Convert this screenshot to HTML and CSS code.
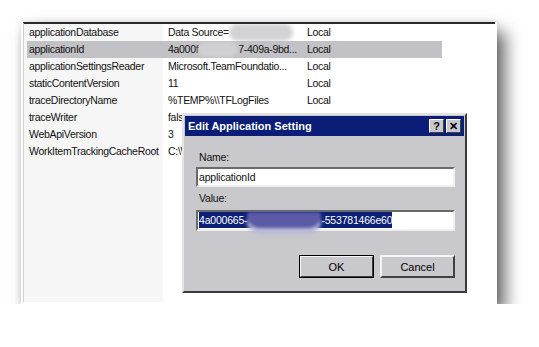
FILE: index.html
```html
<!DOCTYPE html>
<html lang="en">
<head>
  <meta charset="UTF-8" />
  <title>Application Settings</title>
  <link rel="stylesheet" href="styles.css">
</head>
<body>

  <div class="panel">
    <div class="list">
      <div class="row">
        <span class="key">applicationDatabase</span>
        <span class="val">Data Source=<i class="smudge smudge-grey"></i></span>
        <span class="scope">Local</span>
      </div>
      <div class="row selected">
        <span class="key">applicationId</span>
        <span class="val">4a000f<i class="smudge smudge-sel"></i>7-409a-9bd...</span>
        <span class="scope">Local</span>
      </div>
      <div class="row">
        <span class="key">applicationSettingsReader</span>
        <span class="val">Microsoft.TeamFoundatio...</span>
        <span class="scope">Local</span>
      </div>
      <div class="row">
        <span class="key">staticContentVersion</span>
        <span class="val">11</span>
        <span class="scope">Local</span>
      </div>
      <div class="row">
        <span class="key">traceDirectoryName</span>
        <span class="val">%TEMP%\\TFLogFiles</span>
        <span class="scope">Local</span>
      </div>
      <div class="row">
        <span class="key">traceWriter</span>
        <span class="val">false</span>
        <span class="scope">Local</span>
      </div>
      <div class="row">
        <span class="key">WebApiVersion</span>
        <span class="val">3</span>
        <span class="scope">Local</span>
      </div>
      <div class="row">
        <span class="key">WorkItemTrackingCacheRoot</span>
        <span class="val">C:\Windows</span>
        <span class="scope">Local</span>
      </div>
    </div>

    <div class="dialog">
      <div class="titlebar">
        <span class="title">Edit Application Setting</span>
        <span class="caption-btn">?</span>
        <span class="caption-btn">&#x2715;</span>
      </div>
      <div class="dialog-body">
        <label class="field-label">Name:</label>
        <div class="textbox">applicationId</div>
        <label class="field-label">Value:</label>
        <div class="textbox tall">
          <span class="selection">4a000665-<i class="smudge smudge-blue"></i>-553781466e60</span>
        </div>
        <div class="buttons">
          <button class="btn default">OK</button>
          <button class="btn">Cancel</button>
        </div>
      </div>
    </div>
  </div>

</body>
</html>
```

FILE: styles.css
```css
body {
  margin: 0;
  padding: 22px 0 0 21px;
  background: #fff;
  font-family: 'Liberation Sans', Arial, sans-serif;
  font-size: 10.5px;
  letter-spacing: -0.3px;
  color: #111;
}

.panel {
  position: relative;
  width: 472px;
  height: 280px;
  padding: 0 2px 2px 2px;
  background: #fff;
  box-shadow: 8px 10px 16px rgba(0, 0, 0, 0.6), 0 0 6px rgba(0, 0, 0, 0.12);
}

.list {
  height: 100%;
  border-top: 2px solid #2a2a2a;
  border-left: 1px solid #cfcfcf;
  background: linear-gradient(to right, #f6f6f6 139px, #fff 139px);
  padding-left: 3px;
  box-sizing: border-box;
}

.row {
  display: grid;
  grid-template-columns: 136px 139px 1fr;
  width: 415px;
  height: 17px;
  line-height: 17px;
  white-space: nowrap;
}

.row.selected {
  background: #c2c1c6;
}

.key {
  padding-left: 2px;
}

.val,
.scope {
  padding-left: 5px;
  overflow: hidden;
}

.smudge {
  display: inline-block;
  vertical-align: top;
  border-radius: 9px;
  filter: blur(2px);
}

.smudge-grey {
  width: 64px;
  height: 17px;
  background: #d2d2d4;
}

.smudge-sel {
  width: 40px;
  height: 15px;
  margin-top: 1px;
  background: #d0d0d4;
}

/* dialog floating over the list */
.dialog {
  position: absolute;
  left: 161px;
  top: 91px;
  width: 281px;
  height: 176px;
  background: #c9c8cc;
  border: 2px solid;
  border-color: #e4e4e4 #3c3c3c #3c3c3c #e4e4e4;
  letter-spacing: 0;
}

.titlebar {
  display: flex;
  align-items: center;
  gap: 2px;
  height: 20px;
  margin: 1px;
  padding: 0 3px 0 3px;
  background: #0a1e78;
  color: #fff;
}

.title {
  flex: 1;
  font-weight: bold;
  font-size: 11px;
}

.caption-btn {
  width: 13px;
  height: 12px;
  line-height: 12px;
  text-align: center;
  background: #c9c8cc;
  color: #000;
  font-weight: bold;
  font-size: 11px;
  border: 1px solid;
  border-color: #fff #404040 #404040 #fff;
}

.dialog-body {
  display: flex;
  flex-direction: column;
  padding: 13px 10px 0 12px;
  letter-spacing: -0.2px;
}

.field-label {
  margin-left: 3px;
  line-height: 14px;
  margin-bottom: 3px;
}

.textbox {
  height: 16px;
  line-height: 16px;
  padding-left: 1px;
  margin-bottom: 4px;
  background: #fff;
  border: 2px solid;
  border-color: #6a6a6a #f0f0f0 #f0f0f0 #6a6a6a;
  white-space: nowrap;
}

.textbox.tall {
  height: 17px;
  line-height: 17px;
  margin-top: 2px;
}

.selection {
  display: inline-block;
  height: 16px;
  line-height: 16px;
  background: #0c2078;
  color: #fff;
}

.smudge-blue {
  width: 74px;
  height: 16px;
  background: #5b5aa6;
  filter: blur(1.5px);
  border-radius: 4px 4px 14px 14px;
  box-shadow: 0 6px 3px #b9b8d8;
}

.buttons {
  display: flex;
  justify-content: flex-end;
  gap: 6px;
  margin-top: 20px;
}

.btn {
  width: 75px;
  height: 23px;
  font-family: inherit;
  font-size: 11px;
  background: #c9c8cc;
  color: #000;
  border: 2px solid;
  border-color: #f4f4f4 #404040 #404040 #f4f4f4;
  padding: 0;
}

.btn.default {
  outline: 1px solid #000;
  outline-offset: -1px;
}
```
